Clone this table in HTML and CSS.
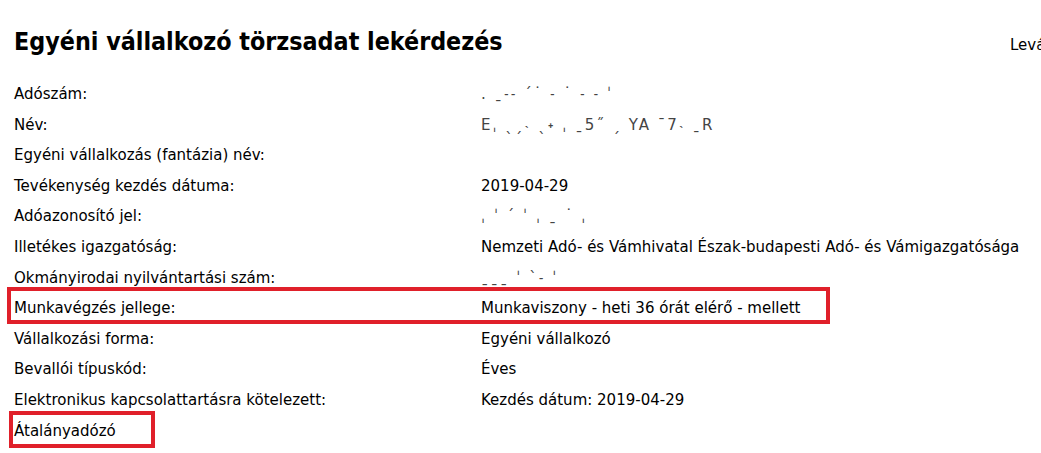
FILE: index.html
```html
<!DOCTYPE html>
<html lang="hu">
<head>
<meta charset="utf-8">
<title>Egyéni vállalkozó törzsadat lekérdezés</title>
<link rel="stylesheet" href="styles.css">
</head>
<body>
<div class="page">
  <header class="head">
    <h1 class="title">Egyéni vállalkozó törzsadat lekérdezés</h1>
    <a class="detach">Leválasztás</a>
  </header>
  <div class="rows">
    <div class="row"><span class="lbl">Adószám:</span><span class="val redact">. ˍ˗˗ ˊ˙ ˗ ˙ ˗ ˗ ˈ</span></div>
    <div class="row"><span class="lbl">Név:</span><span class="val redact">Eˌ ˎˏ˴ ˎ˖ ˌ ˍ5˝ ˏ YA ˉ7˴ ˍR</span></div>
    <div class="row"><span class="lbl">Egyéni vállalkozás (fantázia) név:</span><span class="val"></span></div>
    <div class="row"><span class="lbl">Tevékenység kezdés dátuma:</span><span class="val">2019-04-29</span></div>
    <div class="row"><span class="lbl">Adóazonosító jel:</span><span class="val redact">ˌ ˈ ˊ ˈ ˌ ˍ ˙ ˌ</span></div>
    <div class="row"><span class="lbl">Illetékes igazgatóság:</span><span class="val">Nemzeti Adó- és Vámhivatal Észak-budapesti Adó- és Vámigazgatósága</span></div>
    <div class="row"><span class="lbl">Okmányirodai nyilvántartási szám:</span><span class="val redact">ˍˍˍ ˈ ˋ˗ ˈ</span></div>
    <div class="row"><span class="lbl">Munkavégzés jellege:</span><span class="val">Munkaviszony - heti 36 órát elérő - mellett</span></div>
    <div class="row"><span class="lbl">Vállalkozási forma:</span><span class="val">Egyéni vállalkozó</span></div>
    <div class="row"><span class="lbl">Bevallói típuskód:</span><span class="val">Éves</span></div>
    <div class="row"><span class="lbl">Elektronikus kapcsolattartásra kötelezett:</span><span class="val">Kezdés dátum: 2019-04-29</span></div>
    <div class="row"><span class="lbl">Átalányadózó</span></div>
  </div>
  <div class="mark mark-work"></div>
  <div class="mark mark-flat"></div>
</div>
</body>
</html>
```
FILE: styles.css
```css
html, body {
  margin: 0;
  padding: 0;
  background: #ffffff;
  overflow: hidden;
}
body {
  font-family: "DejaVu Sans", Verdana, sans-serif;
  color: #000;
  width: 1041px;
  height: 453px;
}
.page {
  position: relative;
  padding: 0 0 0 14px;
}
.head {
  display: flex;
  align-items: baseline;
  justify-content: space-between;
  width: 1100px;
  padding-top: 28px;
  height: 48px;
  box-sizing: border-box;
}
.title {
  margin: 0;
  font-family: "DejaVu Sans Condensed", "DejaVu Sans", Verdana, sans-serif;
  font-size: 24.8px;
  font-weight: bold;
  line-height: 28px;
}
.detach {
  font-size: 15px;
  color: #000;
  width: 104px;
}
.rows {
  display: flex;
  flex-direction: column;
  padding-top: 31px;
}
.row {
  display: grid;
  grid-template-columns: 467px auto;
  font-size: 15px;
  line-height: 30.6px;
  height: 30.6px;
}
.redact {
  color: #444;
  letter-spacing: 2px;
}
.mark {
  position: absolute;
  border: 4px solid #e0202a;
  box-sizing: border-box;
}
.mark-work {
  left: 7px;
  top: 287px;
  width: 823px;
  height: 37px;
}
.mark-flat {
  left: 9px;
  top: 411px;
  width: 146px;
  height: 37px;
}
```
